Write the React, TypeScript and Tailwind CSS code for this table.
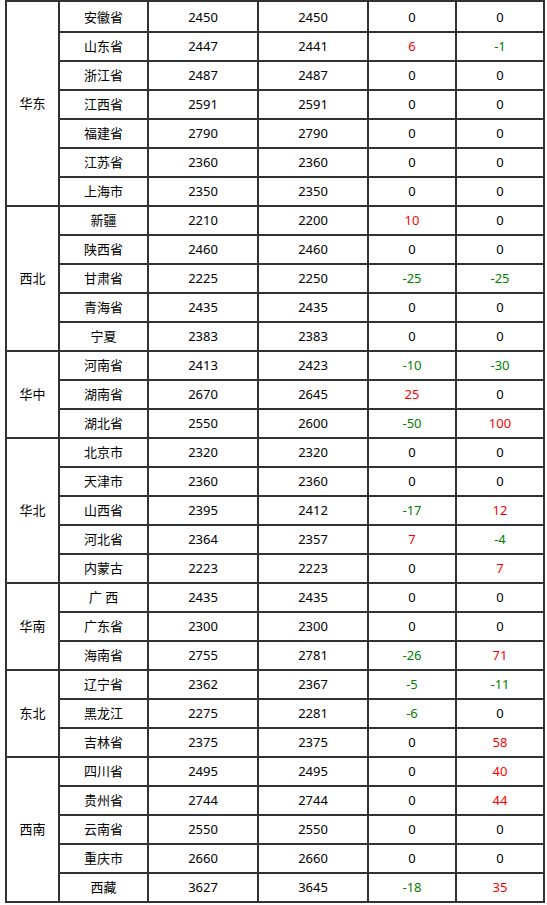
const groups: { region: string; span: string; rows: [string, string, string, string, string][] }[] = [
  {
    region: '华东',
    span: 'row-span-7',
    rows: [
      ['安徽省', '2450', '2450', '0', '0'],
      ['山东省', '2447', '2441', '6', '-1'],
      ['浙江省', '2487', '2487', '0', '0'],
      ['江西省', '2591', '2591', '0', '0'],
      ['福建省', '2790', '2790', '0', '0'],
      ['江苏省', '2360', '2360', '0', '0'],
      ['上海市', '2350', '2350', '0', '0'],
    ],
  },
  {
    region: '西北',
    span: 'row-span-5',
    rows: [
      ['新疆', '2210', '2200', '10', '0'],
      ['陕西省', '2460', '2460', '0', '0'],
      ['甘肃省', '2225', '2250', '-25', '-25'],
      ['青海省', '2435', '2435', '0', '0'],
      ['宁夏', '2383', '2383', '0', '0'],
    ],
  },
  {
    region: '华中',
    span: 'row-span-3',
    rows: [
      ['河南省', '2413', '2423', '-10', '-30'],
      ['湖南省', '2670', '2645', '25', '0'],
      ['湖北省', '2550', '2600', '-50', '100'],
    ],
  },
  {
    region: '华北',
    span: 'row-span-5',
    rows: [
      ['北京市', '2320', '2320', '0', '0'],
      ['天津市', '2360', '2360', '0', '0'],
      ['山西省', '2395', '2412', '-17', '12'],
      ['河北省', '2364', '2357', '7', '-4'],
      ['内蒙古', '2223', '2223', '0', '7'],
    ],
  },
  {
    region: '华南',
    span: 'row-span-3',
    rows: [
      ['广 西', '2435', '2435', '0', '0'],
      ['广东省', '2300', '2300', '0', '0'],
      ['海南省', '2755', '2781', '-26', '71'],
    ],
  },
  {
    region: '东北',
    span: 'row-span-3',
    rows: [
      ['辽宁省', '2362', '2367', '-5', '-11'],
      ['黑龙江', '2275', '2281', '-6', '0'],
      ['吉林省', '2375', '2375', '0', '58'],
    ],
  },
  {
    region: '西南',
    span: 'row-span-5',
    rows: [
      ['四川省', '2495', '2495', '0', '40'],
      ['贵州省', '2744', '2744', '0', '44'],
      ['云南省', '2550', '2550', '0', '0'],
      ['重庆市', '2660', '2660', '0', '0'],
      ['西藏', '3627', '3645', '-18', '35'],
    ],
  },
];

const cell = 'flex items-center justify-center border-r-2 border-b-2 border-[#333]';

function tone(v: string) {
  if (v === '0') return 'text-black';
  return v.startsWith('-') ? 'text-[#008000]' : 'text-[#ff0000]';
}

export default function App() {
  return (
    <div className="bg-white min-h-[905px] text-[13px] text-black" style={{ fontFamily: '"Noto Sans", "Noto Sans CJK SC", sans-serif' }}>
      <div className="ml-[5px] grid w-[540px] grid-cols-[53px_89px_110px_110px_88px_88px] grid-rows-[31px_repeat(30,29px)] border-l-2 border-t-2 border-[#333]">
        {groups.map((g, gi) => (
          <>
            <div key={g.region} className={`${cell} ${g.span}`}>{g.region}</div>
            {g.rows.map((r, ri) => {
              const first = gi === 0 && ri === 0 ? 'pt-[2px]' : '';
              return (
                <>
                  <div className={`${cell} ${first}`}>{r[0]}</div>
                  <div className={`${cell} ${first}`}>{r[1]}</div>
                  <div className={`${cell} ${first}`}>{r[2]}</div>
                  <div className={`${cell} ${first} ${tone(r[3])}`}>{r[3]}</div>
                  <div className={`${cell} ${first} ${tone(r[4])}`}>{r[4]}</div>
                </>
              );
            })}
          </>
        ))}
      </div>
    </div>
  );
}
